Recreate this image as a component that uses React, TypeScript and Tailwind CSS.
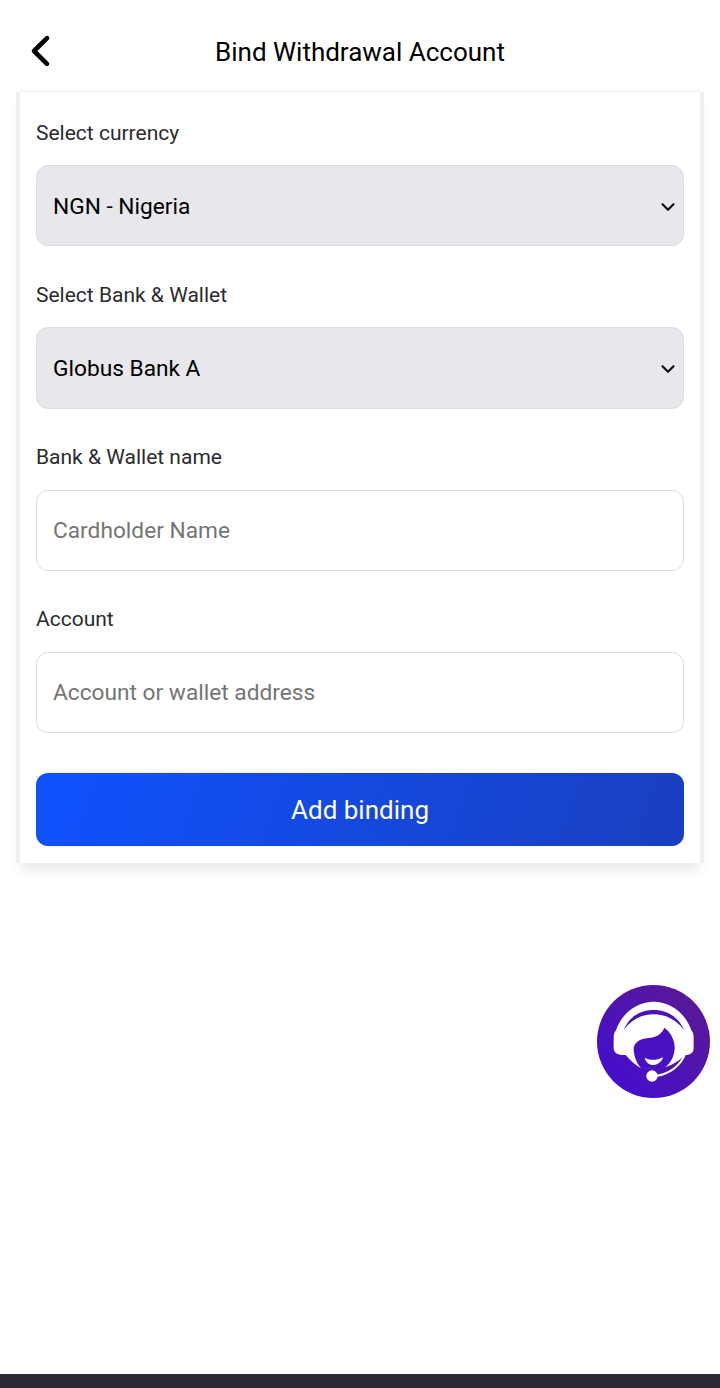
import React from 'react'
import { ChevronDown } from 'lucide-react'

const BackIcon = () => (
  <svg width="24" height="36" viewBox="0 0 24 36" fill="none">
    <path d="M19 4.2 L6 17 L19 29.8" stroke="#000" strokeWidth="4.6" strokeLinecap="round" strokeLinejoin="round" />
  </svg>
)

const SupportIcon = () => (
  <svg width="113" height="113" viewBox="0 0 113 113">
    <defs>
      <linearGradient id="sup" x1="0" y1="1" x2="1" y2="0">
        <stop offset="0" stopColor="#3f0cd6" />
        <stop offset="1" stopColor="#5e1a8e" />
      </linearGradient>
    </defs>
    <circle cx="56.5" cy="56.5" r="56.5" fill="url(#sup)" />
    <g transform="translate(8 10) scale(0.3333)">
      {/* headband + ear cups + head */}
      <path
        d="M26 130 C26 118 28 112 33 106 C50 55 95 20 146 20 C197 20 242 55 259 106 C264 112 266 118 266 130 L266 160 C266 174 254 182 238 180 C226 196 205 208 180 217 L110 221 C92 210 74 196 62 180 C40 182 26 174 26 160 Z"
        fill="#fff"
      />
      {/* gap between band and head */}
      <path d="M56 106 C72 64 108 45 146 45 C184 45 220 64 238 106 C214 74 182 58 146 58 C110 58 78 74 56 106 Z" fill="#4a12b8" />
      {/* hair and face */}
      <path
        d="M86 165 C84 145 103 131 130 129 C150 127 170 120 178 98 C196 110 210 135 209 160 C208 185 196 205 180 218 L110 222 C98 208 88 190 86 165 Z"
        fill="#4710c0"
      />
      <path d="M119 188 C134 197 156 197 174 186 C170 203 155 210 145 210 C133 210 122 202 119 188 Z" fill="#fff" />
      {/* mic boom */}
      <path d="M150 243 C190 238 228 215 243 170" fill="none" stroke="#fff" strokeWidth="6" strokeLinecap="round" />
      <circle cx="141" cy="243" r="17" fill="#fff" />
    </g>
  </svg>
)

const labelClass = 'block text-[21px] leading-[26px] text-[#2b2b2f]'

function SelectField({ label, value }: { label: string; value: string }) {
  return (
    <div className="pb-[35.6px]">
      <span className={labelClass}>{label}</span>
      <div className="mt-[19.4px] flex h-[81.2px] items-center justify-between rounded-xl border border-[#dcdce0] bg-[#e8e8ec] pt-[2.6px] pl-4 pr-[4px] text-[22.7px] text-black">
        <span>{value}</span>
        <ChevronDown size={22} strokeWidth={2.4} className="text-[#111]" />
      </div>
    </div>
  )
}

function InputField({ label, placeholder }: { label: string; placeholder: string }) {
  return (
    <div className="pb-[35.6px]">
      <span className={labelClass}>{label}</span>
      <div className="mt-[19.4px] flex h-[81.2px] items-center rounded-xl border border-[#dcdce0] bg-white pt-[1.6px] px-4 text-[22.7px] text-[#757575]">
        {placeholder}
      </div>
    </div>
  )
}

export default function App() {
  return (
    <div className="relative flex h-[1388px] w-[720px] flex-col overflow-hidden bg-white font-['Roboto',sans-serif]">
      <header className="relative flex h-[92px] shrink-0 items-center justify-center pt-[12px]">
        <button className="absolute left-[28px] top-[34px]">
          <BackIcon />
        </button>
        <h1 className="text-[26px] font-normal text-black">Bind Withdrawal Account</h1>
      </header>

      <div className="mx-[20px] shrink-0 bg-white px-4 pt-[27.8px] pb-[17px] shadow-[0_-1px_0_#eeeeee,-4px_0_0_#eeeeee,4px_0_0_#eeeeee,0_8px_10px_rgba(0,0,0,0.08)]">
        <SelectField label="Select currency" value="NGN - Nigeria" />
        <SelectField label="Select Bank & Wallet" value="Globus Bank A" />
        <InputField label="Bank & Wallet name" placeholder="Cardholder Name" />
        <InputField label="Account" placeholder="Account or wallet address" />
        <button className="mt-[4.4px] flex h-[73px] w-full items-center justify-center rounded-xl bg-[linear-gradient(110deg,#0f52ff,#1a3fbf)] pt-[2px] text-[26px] text-white">
          Add binding
        </button>
      </div>

      <div className="absolute left-[597px] top-[985px]">
        <SupportIcon />
      </div>

      <div className="mt-auto h-[14px] bg-[#2a2a35]" />
    </div>
  )
}
